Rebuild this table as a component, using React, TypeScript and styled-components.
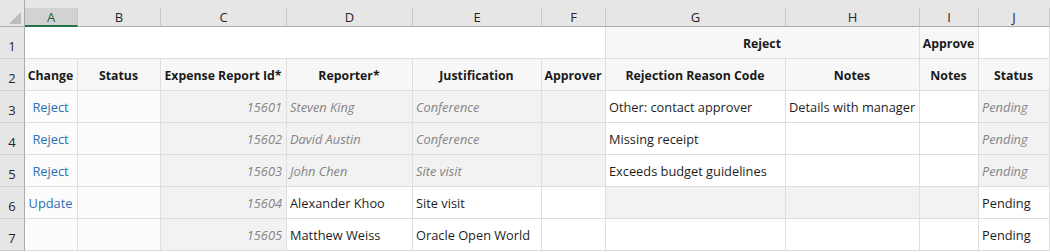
import React from 'react';
import styled, { createGlobalStyle } from 'styled-components';

type Tone = 'plain' | 'link' | 'muted';
type Shade = 'white' | 'soft' | 'grey' | 'head';

interface CellData {
  text?: string;
  tone?: Tone;
  shade?: Shade;
  align?: 'left' | 'center' | 'right';
  span?: number;
  bold?: boolean;
}

const columns = ['A', 'B', 'C', 'D', 'E', 'F', 'G', 'H', 'I', 'J'];
const widths = [53, 83, 126, 126, 129, 64, 180, 134, 59, 71];

const headerTop: CellData[] = [
  { span: 6, shade: 'white' },
  { text: 'Reject', span: 2, shade: 'head', bold: true, align: 'center' },
  { text: 'Approve', shade: 'head', bold: true, align: 'center' },
  { shade: 'white' },
];

const headerLabels = [
  'Change',
  'Status',
  'Expense Report Id*',
  'Reporter*',
  'Justification',
  'Approver',
  'Rejection Reason Code',
  'Notes',
  'Notes',
  'Status',
];

const rejected = (
  id: string,
  who: string,
  why: string,
  reason: string,
  notes = ''
): CellData[] => [
  { text: 'Reject', tone: 'link', align: 'center', shade: 'soft' },
  { shade: 'soft' },
  { text: id, tone: 'muted', align: 'right', shade: 'grey' },
  { text: who, tone: 'muted', shade: 'grey' },
  { text: why, tone: 'muted', shade: 'grey' },
  { shade: 'grey' },
  { text: reason },
  { text: notes },
  {},
  { text: 'Pending', tone: 'muted', shade: 'grey' },
];

const body: CellData[][] = [
  rejected('15601', 'Steven King', 'Conference', 'Other: contact approver', 'Details with manager'),
  rejected('15602', 'David Austin', 'Conference', 'Missing receipt'),
  rejected('15603', 'John Chen', 'Site visit', 'Exceeds budget guidelines'),
  [
    { text: 'Update', tone: 'link', align: 'center', shade: 'soft' },
    { shade: 'soft' },
    { text: '15604', tone: 'muted', align: 'right', shade: 'grey' },
    { text: 'Alexander Khoo' },
    { text: 'Site visit' },
    {},
    { shade: 'grey' },
    { shade: 'grey' },
    { shade: 'grey' },
    { text: 'Pending' },
  ],
  [
    { shade: 'soft' },
    { shade: 'soft' },
    { text: '15605', tone: 'muted', align: 'right', shade: 'grey' },
    { text: 'Matthew Weiss' },
    { text: 'Oracle Open World' },
    {},
    {},
    {},
    {},
    { text: 'Pending' },
  ],
];

const App = () => {
  const rows: CellData[][] = [
    headerTop,
    headerLabels.map((text) => ({ text, bold: true, align: 'center', shade: 'head' })),
    ...body,
  ];

  return (
    <>
      <GlobalStyle />
      <Sheet>
        <Corner>
          <svg width="12" height="12" viewBox="0 0 12 12">
            <polygon points="12,0 12,12 0,12" fill="#bcbcbc" />
          </svg>
        </Corner>
        {columns.map((c, i) => (
          <ColHead key={c} $selected={i === 0}>
            {c}
          </ColHead>
        ))}
        {rows.map((row, r) => (
          <React.Fragment key={r}>
            <RowNum>{r + 1}</RowNum>
            {row.map((cell, c) => (
              <Cell
                key={c}
                $span={cell.span ?? 1}
                $shade={cell.shade ?? 'white'}
                $tone={cell.tone ?? 'plain'}
                $align={cell.align ?? 'left'}
                $bold={!!cell.bold}
              >
                {cell.text}
              </Cell>
            ))}
          </React.Fragment>
        ))}
      </Sheet>
    </>
  );
};

export default App;

const GlobalStyle = createGlobalStyle`
  body {
    margin: 0;
    background: #ffffff;
    font-family: "Open Sans", "Noto Sans", sans-serif;
  }
`;

const shades: Record<Shade, string> = {
  white: '#ffffff',
  soft: '#fcfcfc',
  grey: '#f2f2f2',
  head: '#f7f7f7',
};

const tones: Record<Tone, string> = {
  plain: '#1e1e1e',
  link: '#2b6fb4',
  muted: '#858585',
};

const Sheet = styled.div`
  display: grid;
  grid-template-columns: 25px ${widths.map((w) => `${w}px`).join(' ')};
  grid-template-rows: 27px repeat(7, 32px);
  width: 1050px;
  font-size: 12.8px;
`;

const Corner = styled.div`
  display: flex;
  align-items: flex-start;
  justify-content: flex-end;
  padding: 12px 3px 0 0;
  background: #e6e6e6;
  border-right: 1px solid #ababab;
  border-bottom: 1px solid #ababab;
  box-sizing: border-box;
`;

const ColHead = styled.div<{ $selected: boolean }>`
  display: flex;
  align-items: center;
  justify-content: center;
  margin-top: 8px;
  background: ${(p) => (p.$selected ? '#d2d2d2' : '#e6e6e6')};
  color: ${(p) => (p.$selected ? '#1d5f3a' : '#262626')};
  border-right: 1px solid #c8c8c8;
  border-bottom: ${(p) => (p.$selected ? '2px solid #217346' : '1px solid #ababab')};
  box-sizing: border-box;
  font-size: 13px;
  position: relative;

  &::before {
    content: '';
    position: absolute;
    left: 0;
    right: -1px;
    top: -8px;
    height: 8px;
    background: #e6e6e6;
  }
`;

const RowNum = styled.div`
  display: flex;
  align-items: flex-end;
  justify-content: center;
  padding-bottom: 3px;
  background: #e6e6e6;
  color: #262626;
  border-right: 1px solid #ababab;
  border-bottom: 1px solid #cfcfcf;
  box-sizing: border-box;
  font-size: 13px;
`;

const Cell = styled.div<{
  $span: number;
  $shade: Shade;
  $tone: Tone;
  $align: 'left' | 'center' | 'right';
  $bold: boolean;
}>`
  grid-column: span ${(p) => p.$span};
  display: flex;
  align-items: center;
  justify-content: ${(p) =>
    p.$align === 'center' ? 'center' : p.$align === 'right' ? 'flex-end' : 'flex-start'};
  padding: 1px 4px 0 3px;
  background: ${(p) => shades[p.$shade]};
  color: ${(p) => (p.$bold ? '#1a1a1a' : tones[p.$tone])};
  font-size: ${(p) => (p.$bold ? '12.3px' : 'inherit')};
  font-weight: ${(p) => (p.$bold ? 700 : 400)};
  font-style: ${(p) => (p.$tone === 'muted' ? 'italic' : 'normal')};
  border-right: 1px solid #dedede;
  border-bottom: 1px solid #dedede;
  box-sizing: border-box;
  white-space: nowrap;
  overflow: hidden;
`;
